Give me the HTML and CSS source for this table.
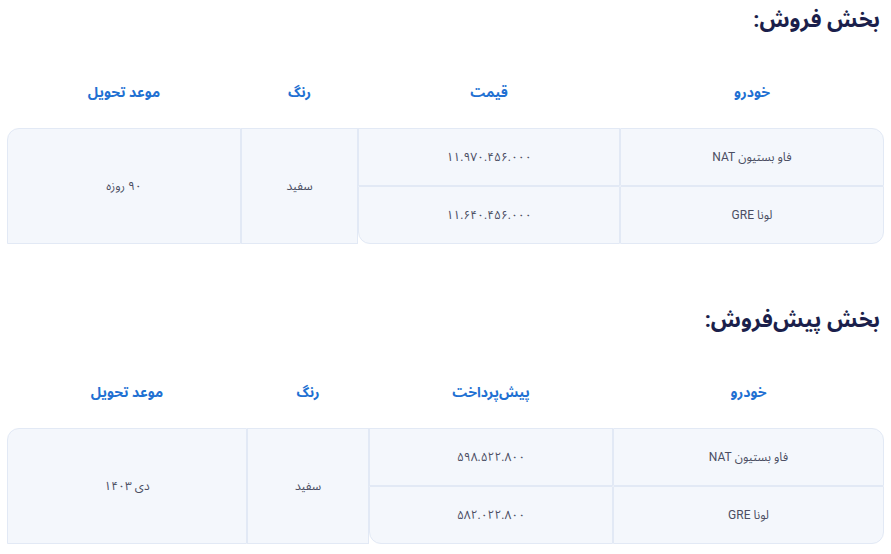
FILE: index.html
```html
<!DOCTYPE html>
<html lang="fa" dir="rtl">
<head>
    <meta charset="UTF-8">
    <meta name="viewport" content="width=device-width, initial-scale=1.0">
    <title>لیست قیمت</title>
    <link rel="stylesheet" href="styles.css">
</head>
<body>

    <!-- Sale -->
    <div class="section">
        <h2 class="section-title">بخش فروش:</h2>
        <table class="price-table sale-table">
            <colgroup>
                <col class="col-car">
                <col class="col-price">
                <col class="col-color">
                <col class="col-date">
            </colgroup>
            <thead>
                <tr>
                    <th>خودرو</th>
                    <th>قیمت</th>
                    <th>رنگ</th>
                    <th>موعد تحویل</th>
                </tr>
            </thead>
            <tbody>
                <tr>
                    <td>فاو بستیون NAT</td>
                    <td>۱۱.۹۷۰.۴۵۶.۰۰۰</td>
                    <td rowspan="2">سفید</td>
                    <td rowspan="2">۹۰ روزه</td>
                </tr>
                <tr>
                    <td>لونا GRE</td>
                    <td>۱۱.۶۴۰.۴۵۶.۰۰۰</td>
                </tr>
            </tbody>
        </table>
    </div>

    <!-- Pre-sale -->
    <div class="section">
        <h2 class="section-title">بخش پیش‌فروش:</h2>
        <table class="price-table presale-table">
            <colgroup>
                <col class="col-car">
                <col class="col-price">
                <col class="col-color">
                <col class="col-date">
            </colgroup>
            <thead>
                <tr>
                    <th>خودرو</th>
                    <th>پیش‌پرداخت</th>
                    <th>رنگ</th>
                    <th>موعد تحویل</th>
                </tr>
            </thead>
            <tbody>
                <tr>
                    <td>فاو بستیون NAT</td>
                    <td>۵۹۸.۵۲۲.۸۰۰</td>
                    <td rowspan="2">سفید</td>
                    <td rowspan="2">دی ۱۴۰۳</td>
                </tr>
                <tr>
                    <td>لونا GRE</td>
                    <td>۵۸۲.۰۲۲.۸۰۰</td>
                </tr>
            </tbody>
        </table>
    </div>

</body>
</html>
```

FILE: styles.css
```css
/* Reset & Global Styles */
* {
    margin: 0;
    padding: 0;
    box-sizing: border-box;
}

body {
    background: #ffffff;
    font-family: Roboto, "Noto Sans Arabic", "Vazirmatn", "DejaVu Sans", sans-serif;
    color: #4b4e63;
    padding: 0 7px;
}

/* Sections */
.section {
    margin-bottom: 56px;
}

.section-title {
    font-size: 22px;
    line-height: 40px;
    font-weight: 700;
    color: #1b1f4b;
    padding-right: 4px;
}

/* Tables */
.price-table {
    width: 100%;
    table-layout: fixed;
    border-collapse: separate;
    border-spacing: 0;
    margin-top: 16px;
}

.price-table th {
    height: 72px;
    font-size: 14px;
    font-weight: 700;
    color: #2170d2;
    text-align: center;
    vertical-align: middle;
}

.price-table td {
    height: 58px;
    font-size: 12px;
    text-align: center;
    vertical-align: middle;
    background: #f4f7fc;
    border: 1px solid #e2e9f5;
}

/* Rounded corners */
.price-table tbody tr:first-child td:first-child {
    border-top-right-radius: 12px;
}

.price-table tbody tr:first-child td:last-child {
    border-top-left-radius: 12px;
}

.price-table tbody tr:last-child td:first-child {
    border-bottom-right-radius: 12px;
}

.price-table tbody tr:last-child td:last-child {
    border-bottom-left-radius: 12px;
}

/* Column widths */
.sale-table .col-car { width: 264px; }
.sale-table .col-price { width: 262px; }
.sale-table .col-color { width: 117px; }
.sale-table .col-date { width: 234px; }

.presale-table .col-car { width: 271px; }
.presale-table .col-price { width: 244px; }
.presale-table .col-color { width: 122px; }
.presale-table .col-date { width: 240px; }
```
